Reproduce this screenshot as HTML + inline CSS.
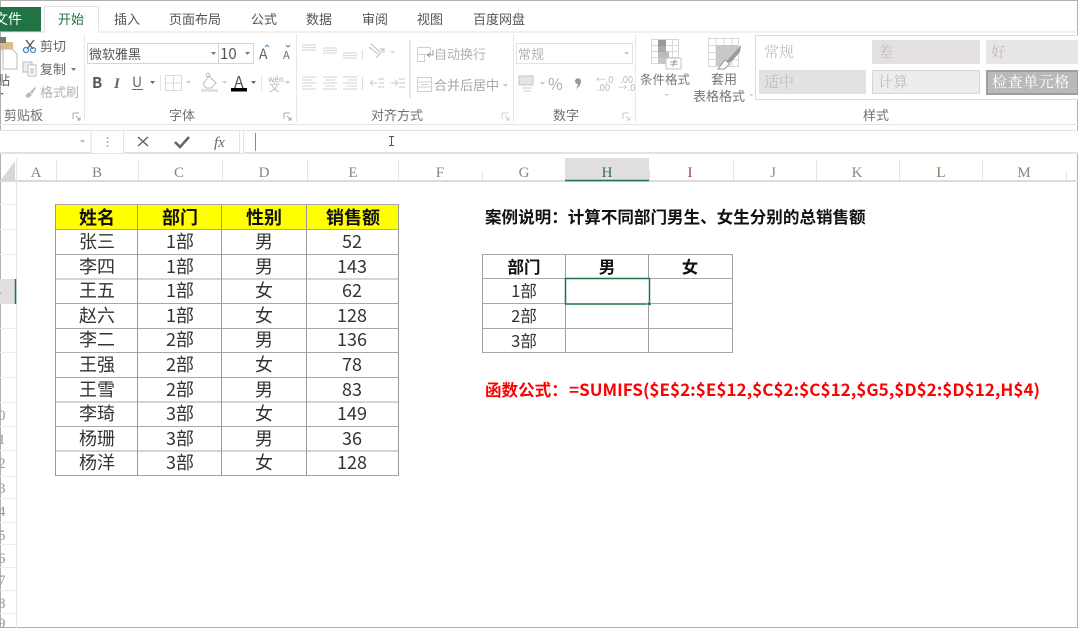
<!DOCTYPE html>
<html lang="zh"><head><meta charset="utf-8"><title>Excel</title>
<style>
html,body{margin:0;padding:0;width:1078px;height:628px;overflow:hidden;background:#fff}
svg{display:block;position:absolute;left:0;top:0;filter:blur(.3px)}
text{font-family:"Noto Sans CJK SC","Liberation Sans",sans-serif}
.tab{font-size:13px;fill:#555}
.rb{font-size:13px;fill:#666}
.dim{font-size:13px;fill:#b4b0b4}
.grp{font-size:13px;fill:#707070}
.col{font-family:"Liberation Serif",serif;font-size:15px;fill:#7d8a8a;text-anchor:middle}
.row{font-family:"Liberation Serif",serif;font-size:15px;fill:#999}
.sty{font-family:"Noto Serif CJK SC",serif;font-size:15px;fill:#c0bcc0}
.c{font-size:18px;fill:#333;text-anchor:middle}
.h{font-size:18px;font-weight:bold;fill:#111;text-anchor:middle}
.c2{font-size:16.500px;fill:#333;text-anchor:middle}
.h2{font-size:16.500px;font-weight:bold;fill:#111;text-anchor:middle}
</style></head><body>
<svg width="1078" height="628" viewBox="0 0 1078 628" xmlns="http://www.w3.org/2000/svg">
<rect width="1078" height="628" fill="#fff"/>
<!-- frame -->
<path d="M0 .5H1078M.5 0V628M0 627.5H1078M1077.5 0V628" stroke="#b0b0b0" fill="none"/>
<!-- tabs -->
<rect x="0" y="7" width="41" height="25" fill="#217346"/>
<text x="-6" y="24" font-size="14" fill="#fff">文件</text>
<path d="M0 32H44.500V6.500H98.500V32H1078" stroke="#e2e2e2" fill="#fff"/>
<text x="58" y="24" font-size="13" fill="#217346">开始</text>
<text class="tab" x="114" y="24">插入</text>
<text class="tab" x="169" y="24">页面布局</text>
<text class="tab" x="251" y="24">公式</text>
<text class="tab" x="306" y="24">数据</text>
<text class="tab" x="362" y="24">审阅</text>
<text class="tab" x="417" y="24">视图</text>
<text class="tab" x="473" y="24">百度网盘</text>
<!-- group separators -->
<path d="M84.500 34V122M296.500 34V122M513.500 34V122M635.500 34V122" stroke="#e8e8e8"/>
<path d="M0 124.500H1078M0 130.500H1078" stroke="#e4e4e4"/>
<!-- clipboard -->
<path d="M0 42H13V50H0Z" fill="#d0ab70" opacity=".8"/>
<path d="M0 37H6V43H0Z" fill="#777"/>
<path d="M3 49H12L17 54V69H3Z" fill="#fff" stroke="#bbb"/>
<text x="-3" y="85" font-size="13" fill="#555">贴</text>
<path d="M0 93H4L2 95Z" fill="#777"/>
<g stroke="#555" stroke-width="1.300" fill="none"><path d="M26 40L33 49M34 40L27 49"/></g>
<circle cx="26" cy="50" r="2.500" fill="none" stroke="#4a8ac0" stroke-width="1.300"/>
<circle cx="33" cy="50" r="2.500" fill="none" stroke="#4a8ac0" stroke-width="1.300"/>
<text class="rb" x="40" y="51">剪切</text>
<path d="M23 62H32V72H23Z" fill="#eee" stroke="#bbb"/>
<path d="M28 65H36V76H28Z" fill="#fff" stroke="#b5bcc6"/>
<path d="M30 69H34M30 71H34M30 73H34" stroke="#a5b5c5"/>
<text class="rb" x="40" y="74">复制</text>
<path d="M71 68H76L73.500 71Z" fill="#777"/>
<path d="M25 96L29 92L32 95L28 98ZM30 92L35 87L36 88L32 94Z" fill="#b8b8b8"/>
<text class="dim" x="40" y="97">格式刷</text>
<text class="grp" x="4" y="120">剪贴板</text>
<path d="M73 113H79M73 113V119M76 116L80 120M80 117V120H77" stroke="#aaa" fill="none"/>
<!-- font -->
<rect x="87.500" y="43.500" width="166" height="20" fill="#fff" stroke="#d6d6d6"/>
<path d="M218.500 44V63" stroke="#d0d0d0"/>
<text x="89" y="59" font-size="13" fill="#555">微软雅黑</text>
<path d="M211 52H216L213.500 55Z" fill="#777"/>
<text x="220" y="59" font-size="15" fill="#555">10</text>
<path d="M245 52H250L247.500 55Z" fill="#777"/>
<text x="259" y="59" font-size="14" fill="#666">A</text>
<path d="M265 47L267 45L269 47" stroke="#4a86c0" fill="none"/>
<text x="283" y="59" font-size="11" fill="#666">A</text>
<path d="M286 45L288 47L290 45" stroke="#4a86c0" fill="none"/>
<text x="92" y="88" font-size="15" font-weight="bold" fill="#555">B</text>
<text x="114" y="88" font-size="15" font-style="italic" style="font-family:'Liberation Serif',serif;font-weight:bold" fill="#666">I</text>
<text x="132" y="87" font-size="14" fill="#666">U</text>
<path d="M132 89.500H143" stroke="#666"/>
<path d="M150 81H155L152.500 84Z" fill="#666"/>
<path d="M160.500 75V91" stroke="#e6e6e6"/>
<path d="M165.500 75.500H181.500V90.500H165.500ZM173.500 75.500V90.500M165.500 83H181.500" fill="none" stroke="#dcd8dc"/>
<path d="M186 81H191L188.500 84Z" fill="#ccc"/>
<path d="M203 84L209 76L216 83L211 88H206Z" fill="#fff" stroke="#bbb"/>
<circle cx="208" cy="75" r="1.800" fill="none" stroke="#bbb"/>
<rect x="201" y="89" width="17" height="3" fill="#e1e1e1"/>
<path d="M222 81H227L224.500 84Z" fill="#ccc"/>
<text x="234" y="88" font-size="16" fill="#555">A</text>
<rect x="231" y="88" width="16" height="3.500" fill="#000"/>
<path d="M251 81H256L253.500 84Z" fill="#666"/>
<path d="M261.500 75V91" stroke="#e6e6e6"/>
<text x="268" y="82" font-size="8" fill="#aaa">wén</text>
<text x="269" y="91" font-size="11" fill="#bbb">文</text>
<path d="M285 81H290L287.500 84Z" fill="#ccc"/>
<text class="grp" x="169" y="120">字体</text>
<path d="M284 113H290M284 113V119M287 116L291 120M291 117V120H288" stroke="#aaa" fill="none"/>
<!-- alignment -->
<g stroke="#dedcde" stroke-width="1.200" fill="none">
<path d="M302 45H316M302 47.500H316M302 50H316" stroke-width="1.300"/>
<path d="M323 48H337M323 50.500H337M323 53H337"/>
<path d="M343 53H357M343 55.500H357M343 58H357"/>
<path d="M302 77H316M302 80H312M302 83H316M302 86H312M302 89H316"/>
<path d="M323 77H337M325 80H335M323 83H337M325 86H335M323 89H337"/>
<path d="M343 77H357M347 80H357M343 83H357M347 86H357M343 89H357"/>
<path d="M362.500 50V60M362.500 77V90"/>
<path d="M369 47L378 54M371 44L380 52M376 58L384 49M380 49H384V53" stroke="#c8c8c8"/>
<path d="M370 83H377M370 83L373 80M370 83L373 86M378 79H384M379 83H384M378 87H384" stroke="#d2d2d2"/>
<path d="M391 83H398M398 83L395 80M398 83L395 86M399 79H405M399 83H405M399 87H405" stroke="#d2d2d2"/>
</g>
<path d="M390 51H395L392.500 53Z" fill="#ccc"/>
<path d="M410 40V98" stroke="#e9e6e9" stroke-width="2"/>
<g stroke="#cfcfcf" fill="none">
<path d="M417.500 47.500H430.500V54.500H417.500ZM417.500 54.500H424.500V61.500H417.500Z"/>
<path d="M433 50V55H427M427 55L430 53M427 55L430 57" stroke="#999"/>
<path d="M417.500 77.500H431.500V91.500H417.500ZM417.500 82H431.500M417.500 87H431.500M421 84.500H428"/>
</g>
<text class="dim" x="434" y="59" style="font-size:13px">自动换行</text>
<text class="dim" x="434" y="90" style="font-size:13px;fill:#a8a4a8">合并后居中</text>
<path d="M503 84H508L505.500 87Z" fill="#ccc"/>
<text class="grp" x="371" y="120">对齐方式</text>
<path d="M502 113H508M502 113V119M505 116L509 120M509 117V120H506" stroke="#ccc" fill="none"/>
<!-- number -->
<rect x="516.500" y="43.500" width="116" height="20" fill="#fff" stroke="#e2e2e2"/>
<text class="dim" x="518" y="59">常规</text>
<path d="M624 52H629L626.500 55Z" fill="#ccc"/>
<path d="M519 76H533V85H519Z" fill="#e4e4e4" stroke="#c4c4c4"/>
<path d="M522 88H532M524 91H531" stroke="#ccc"/>
<path d="M540 82H545L542.500 85Z" fill="#ccc"/>
<text x="548" y="90" font-size="16" fill="#aaa">%</text>
<path d="M575 81a3 3 0 1 1 6 .500c0 3-2 6-5.500 7.500c1.500-1.500 2.300-3 2.300-5c-1.500 0-2.800-1.300-2.800-3Z" fill="#999"/>
<text x="596" y="83" font-size="9.500" fill="#bbb">←.0</text>
<text x="597" y="91" font-size="9.500" fill="#bbb">.00</text>
<text x="620" y="83" font-size="9.500" fill="#bbb">.00</text>
<text x="618" y="91" font-size="9.500" fill="#bbb">→.0</text>
<text class="grp" x="553" y="120">数字</text>
<path d="M623 113H629M623 113V119M626 116L630 120M630 117V120H627" stroke="#ccc" fill="none"/>
<!-- conditional format icon -->
<g fill="none" stroke="#d8d8d8">
<path d="M651.500 39.500H678.500V63.500H651.500ZM651.500 45.500H678.500M651.500 51.500H678.500M651.500 57.500H678.500M658.500 39.500V63.500M665.500 39.500V63.500M672.500 39.500V63.500"/>
</g>
<rect x="658" y="40" width="8" height="6" fill="#999"/>
<rect x="658" y="46" width="8" height="6" fill="#aaa"/>
<rect x="658" y="52" width="11" height="6" fill="#bbb"/>
<rect x="658" y="58" width="8" height="6" fill="#c6c6c6"/>
<rect x="666" y="58" width="15" height="11" fill="#fff" stroke="#c6c6c6"/>
<text x="669" y="67" font-size="10" fill="#777">≠</text>
<text x="640" y="84" font-size="12.500" fill="#777">条件格式</text>
<path d="M664 94H669L666.500 96Z" fill="#ccc"/>
<!-- table style icon -->
<g fill="none" stroke="#d8d8d8">
<path d="M708.500 38.500H738.500V66.500H708.500ZM708.500 45.500H738.500M708.500 52.500H738.500M708.500 59.500H738.500M716 38.500V66.500M724 38.500V66.500M732 38.500V66.500"/>
</g>
<path d="M716 45H738V52L726 66H716Z" fill="#c8c8c8"/>
<path d="M725 63L733 54L741 45L740 52L731 62Z" fill="#9a9a9a"/>
<path d="M718 69L725 60L730 64L724 69Z" fill="#fff" stroke="#999"/>
<text x="711" y="84" font-size="13" fill="#777">套用</text>
<text x="693" y="101" font-size="13" fill="#777">表格格式</text>
<path d="M749 94H754L751.500 96Z" fill="#ccc"/>
<!-- styles gallery -->
<path d="M1078 35.500H755.500V99.500H1078" fill="#fff" stroke="#dcdcdc"/>
<rect x="872" y="40" width="108" height="24" fill="#e3dfe3"/>
<rect x="986" y="40" width="92" height="24" fill="#e7e5e7"/>
<rect x="759" y="70" width="107" height="24" fill="#e3e1e3"/>
<rect x="872.500" y="70.500" width="107" height="23" fill="#efecef" stroke="#d8d6d8"/>
<rect x="987" y="71" width="91" height="23" fill="#bab8ba" stroke="#9e9c9e" stroke-width="2"/>
<text class="sty" x="764" y="57">常规</text>
<text class="sty" x="878" y="57">差</text>
<text class="sty" x="991" y="57">好</text>
<text class="sty" x="764" y="87">适中</text>
<text class="sty" x="878" y="87">计算</text>
<text class="sty" x="992" y="87" style="fill:#fff;letter-spacing:.6px">检查单元格</text>
<text class="grp" x="863" y="120">样式</text>
<!-- formula bar -->
<rect x="-1" y="130.500" width="92" height="22" fill="#fff" stroke="#e2e2e2"/>
<path d="M80 140H85L82.500 143Z" fill="#bbb"/>
<path d="M107.500 137V139M107.500 141V143M107.500 145V147" stroke="#aaa" stroke-width="1.500"/>
<rect x="123.500" y="130.500" width="116" height="22" fill="#fff" stroke="#e2e2e2"/>
<path d="M138 137L148 146M148 137L138 146" stroke="#666" stroke-width="1.500" fill="none"/>
<path d="M175 142L180 147L189 137" stroke="#666" stroke-width="2.500" fill="none"/>
<text x="214" y="147" font-size="15" font-style="italic" style="font-family:'Liberation Serif',serif" fill="#666">fx</text>
<rect x="243.500" y="130.500" width="840" height="22" fill="#fff" stroke="#e2e2e2"/>
<path d="M255.500 133V151" stroke="#888"/>
<path d="M389 136.500H394M391.500 136.500V145.500M389 145.500H394" stroke="#555" fill="none"/>
<!-- column headers -->
<path d="M0 153.500H1078" stroke="#e4e4e4"/>
<rect x="565" y="158" width="84" height="22" fill="#e1dfe2"/>
<path d="M0 181H1078" stroke="#dcdadc" stroke-width="2"/>
<path d="M565 180.500H649" stroke="#217346" stroke-width="1.500"/>
<path d="M0 181L15 161V181Z" fill="#d8d8d8"/>
<path d="M16.500 158V628M56.500 160V180M138.500 160V180M222.500 160V180M307.500 160V180M398.500 160V180M482.500 171V180M733.500 160V180M816.500 160V180M899.500 160V180M982.500 160V180M1066.500 171V180M649.500 170V180" stroke="#e4e4e4"/>
<text class="col" x="36" y="177">A</text>
<text class="col" x="97" y="177">B</text>
<text class="col" x="179" y="177">C</text>
<text class="col" x="264" y="177">D</text>
<text class="col" x="353" y="177">E</text>
<text class="col" x="440" y="177">F</text>
<text class="col" x="524" y="177">G</text>
<text class="col" x="607" y="177" style="fill:#356a55">H</text>
<text class="col" x="690" y="177" style="fill:#a04a4a">I</text>
<text class="col" x="773" y="177" style="fill:#a08a60">J</text>
<text class="col" x="857" y="177">K</text>
<text class="col" x="941" y="177" style="fill:#8a7a5a">L</text>
<text class="col" x="1024" y="177">M</text>
<!-- row headers -->
<path d="M0 204.500H16M0 229.500H16M0 254.500H16M0 328.500H16M0 352.500H16M0 377.500H16M0 402.500H16M0 426.500H16M0 450.500H16M0 476.500H16M0 498.500H16M0 522.500H16M0 544.500H16M0 567.500H16M0 590.500H16M0 613.500H16" stroke="#ececec"/>
<rect x="0" y="279" width="15" height="25" fill="#e1dfe2"/>
<path d="M15.500 279V304" stroke="#217346" stroke-width="1.500"/>
<text x="-6" y="296" font-size="14" fill="#777" style="font-family:'Liberation Serif',serif">5</text>
<text class="row" x="-2" y="420">0</text>
<text class="row" x="-2" y="444">1</text>
<text class="row" x="-2" y="468">2</text>
<text class="row" x="-2" y="493">3</text>
<text class="row" x="-2" y="516">4</text>
<text class="row" x="-2" y="540">5</text>
<text class="row" x="-2" y="563">6</text>
<text class="row" x="-2" y="585">7</text>
<text class="row" x="-2" y="608">8</text>
<text class="row" x="-2" y="628">9</text>
<!-- main table -->
<rect x="56" y="204" width="343" height="25" fill="#ffff00"/>
<path d="M56 204.500H399M56 229.500H399M56 254.500H399M56 279H399M56 303.500H399M56 328.500H399M56 352.500H399M56 377.500H399M56 402H399M56 426.500H399M56 451H399M56 475.500H399" stroke="#a8a8a8"/>
<path d="M55.500 204V476M137.500 204V476M221.500 204V476M306.500 204V476M398.500 204V476" stroke="#999"/>
<text class="h" x="97" y="224">姓名</text><text class="h" x="180" y="224">部门</text><text class="h" x="264" y="224">性别</text><text class="h" x="353" y="224">销售额</text>
<text class="c" x="97" y="248">张三</text><text class="c" x="180" y="248">1部</text><text class="c" x="264" y="248">男</text><text class="c" x="352" y="248">52</text>
<text class="c" x="97" y="273">李四</text><text class="c" x="180" y="273">1部</text><text class="c" x="264" y="273">男</text><text class="c" x="352" y="273">143</text>
<text class="c" x="97" y="297">王五</text><text class="c" x="180" y="297">1部</text><text class="c" x="264" y="297">女</text><text class="c" x="352" y="297">62</text>
<text class="c" x="97" y="322">赵六</text><text class="c" x="180" y="322">1部</text><text class="c" x="264" y="322">女</text><text class="c" x="352" y="322">128</text>
<text class="c" x="97" y="346">李二</text><text class="c" x="180" y="346">2部</text><text class="c" x="264" y="346">男</text><text class="c" x="352" y="346">136</text>
<text class="c" x="97" y="371">王强</text><text class="c" x="180" y="371">2部</text><text class="c" x="264" y="371">女</text><text class="c" x="352" y="371">78</text>
<text class="c" x="97" y="396">王雪</text><text class="c" x="180" y="396">2部</text><text class="c" x="264" y="396">男</text><text class="c" x="352" y="396">83</text>
<text class="c" x="97" y="420">李琦</text><text class="c" x="180" y="420">3部</text><text class="c" x="264" y="420">女</text><text class="c" x="352" y="420">149</text>
<text class="c" x="97" y="445">杨珊</text><text class="c" x="180" y="445">3部</text><text class="c" x="264" y="445">男</text><text class="c" x="352" y="445">36</text>
<text class="c" x="97" y="469">杨洋</text><text class="c" x="180" y="469">3部</text><text class="c" x="264" y="469">女</text><text class="c" x="352" y="469">128</text>
<!-- description -->
<text x="485" y="223" font-size="16.560" font-weight="bold" fill="#111">案例说明&#xFF1A;计算不同部门男生、女生分别的总销售额</text>
<!-- second table -->
<path d="M482 254.500H733M482 278.500H733M482 303.500H733M482 328.500H733M482 352.500H733" stroke="#a8a8a8"/>
<path d="M482.500 254V353M565.500 254V353M648.500 254V353M732.500 254V353" stroke="#a0a0a0"/>
<text class="h2" x="524" y="273">部门</text><text class="h2" x="607" y="273">男</text><text class="h2" x="690" y="273">女</text>
<text class="c2" x="524" y="297">1部</text>
<text class="c2" x="524" y="322">2部</text>
<text class="c2" x="524" y="347">3部</text>
<rect x="565.500" y="278.500" width="84" height="25.500" fill="#fff" stroke="#217346" stroke-width="1.500"/>
<rect x="647.500" y="302" width="3.500" height="3.500" fill="#217346" stroke="#fff" stroke-width=".5"/>
<!-- formula text -->
<text x="485" y="396" font-size="16.560" font-weight="bold" fill="#ff0000">函数公式&#xFF1A;</text>
<text x="569" y="396" font-size="16.500" font-weight="bold" fill="#ff0000" textLength="471" lengthAdjust="spacingAndGlyphs">=SUMIFS($E$2:$E$12,$C$2:$C$12,$G5,$D$2:$D$12,H$4)</text>
</svg>
</body></html>
